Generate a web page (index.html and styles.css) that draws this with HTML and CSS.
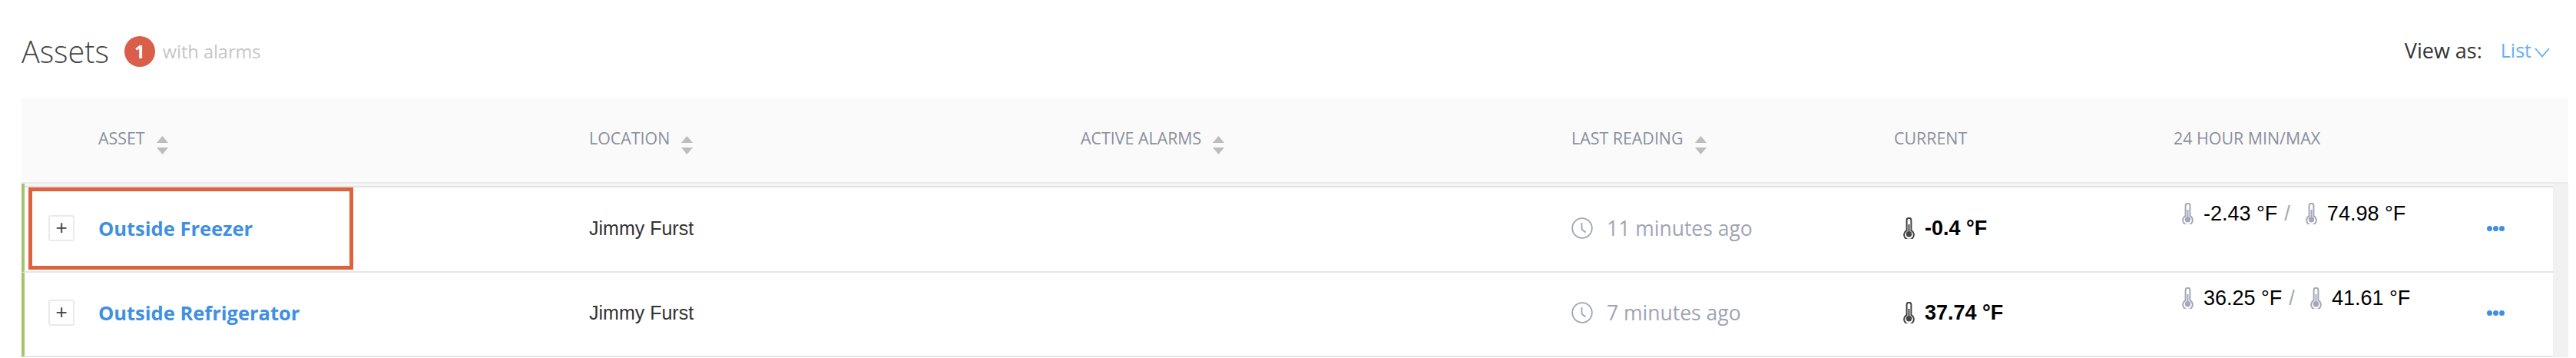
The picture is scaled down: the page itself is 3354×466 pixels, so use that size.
FILE: index.html
```html
<!DOCTYPE html>
<html>
	<head>
		<title>Assets</title>
		<link rel="stylesheet" href="styles.css">
	</head>
	<body>
		<svg class="defs" width="0" height="0">
			<symbol id="thermo" viewBox="0 0 15 28">
				<path d="M4.600 3.600a2.900 2.900 0 0 1 5.800 0v13.400a6.300 6.300 0 1 1-5.800 0z" fill="none" stroke="currentColor" stroke-width="2"/>
				<circle cx="7.500" cy="21.800" r="3.700" fill="currentColor"/>
				<path d="M7.500 9v12" stroke="currentColor" stroke-width="2"/>
			</symbol>
			<symbol id="clock" viewBox="0 0 28 28">
				<circle cx="14" cy="14" r="12.800" fill="none" stroke="currentColor" stroke-width="1.800"/>
				<path d="M13.500 7v8.500l5 4" fill="none" stroke="currentColor" stroke-width="1.800"/>
			</symbol>
			<symbol id="sort" viewBox="0 0 15 24">
				<path d="M7.500 0L15 9H0z" fill="currentColor"/>
				<path d="M0 15h15L7.500 24z" fill="currentColor"/>
			</symbol>
		</svg>

		<div class="topbar">
			<div class="title-group">
				<h1 class="title">Assets</h1>
				<span class="badge">1</span>
				<span class="badge-label">with alarms</span>
			</div>
			<div class="view-as">
				<span class="view-label">View as:</span>
				<span class="view-value">List</span>
				<svg class="chevron" width="20" height="13" viewBox="0 0 20 13"><path d="M1 1l9 10.500L19 1" fill="none" stroke="currentColor" stroke-width="1.800"/></svg>
			</div>
		</div>

		<div class="table-head row-grid">
			<div></div>
			<div class="th">ASSET <svg class="sort"><use href="#sort"/></svg></div>
			<div class="th">LOCATION <svg class="sort"><use href="#sort"/></svg></div>
			<div class="th">ACTIVE ALARMS <svg class="sort"><use href="#sort"/></svg></div>
			<div class="th">LAST READING <svg class="sort"><use href="#sort"/></svg></div>
			<div class="th">CURRENT</div>
			<div class="th">24 HOUR MIN/MAX</div>
			<div></div>
		</div>

		<div class="table-body">
			<div class="row row-grid">
				<div class="cell"><span class="expand">+</span></div>
				<div class="cell"><a class="asset-name">Outside Freezer</a></div>
				<div class="cell location">Jimmy Furst</div>
				<div class="cell"></div>
				<div class="cell reading"><svg class="clock"><use href="#clock"/></svg>11 minutes ago</div>
				<div class="cell current"><svg class="thermo"><use href="#thermo"/></svg>-0.4 °F</div>
				<div class="minmax">
					<svg class="thermo"><use href="#thermo"/></svg><span>-2.43 °F</span><i class="slash">/</i>
					<svg class="thermo second"><use href="#thermo"/></svg><span>74.98 °F</span>
				</div>
				<div class="cell dots"><b></b><b></b><b></b></div>
				<div class="callout"></div>
			</div>
			<div class="row row-grid">
				<div class="cell"><span class="expand">+</span></div>
				<div class="cell"><a class="asset-name">Outside Refrigerator</a></div>
				<div class="cell location">Jimmy Furst</div>
				<div class="cell"></div>
				<div class="cell reading"><svg class="clock"><use href="#clock"/></svg>7 minutes ago</div>
				<div class="cell current"><svg class="thermo"><use href="#thermo"/></svg>37.74 °F</div>
				<div class="minmax">
					<svg class="thermo"><use href="#thermo"/></svg><span>36.25 °F</span><i class="slash">/</i>
					<svg class="thermo second"><use href="#thermo"/></svg><span>41.61 °F</span>
				</div>
				<div class="cell dots"><b></b><b></b><b></b></div>
			</div>
		</div>
	</body>
</html>
```

FILE: styles.css
```css
html, body {
	height: 100%;
	overflow: hidden;
}
body {
	margin: 0;
	background: #fff;
	font-family: "Open Sans", "Liberation Sans", sans-serif;
	position: relative;
}
.defs {
	display: block;
	height: 0;
}

/* top */
.topbar {
	height: 128px;
	box-sizing: border-box;
	padding: 47px 34px 0 28px;
	display: flex;
	justify-content: space-between;
	align-items: flex-start;
}
.title-group {
	display: flex;
	align-items: center;
	height: 40px;
}
.title {
	margin: 0 20px 0 0;
	font-size: 39.500px;
	line-height: 40px;
	font-weight: 300;
	color: #444;
}
.badge {
	width: 40px;
	height: 40px;
	line-height: 40px;
	border-radius: 50%;
	background: #d95f4a;
	color: #fff;
	font-size: 24px;
	font-weight: 700;
	text-align: center;
	margin-right: 10px;
}
.badge-label {
	font-size: 23.500px;
	color: #c6c6c6;
}
.view-as {
	display: flex;
	align-items: center;
	height: 36px;
	font-size: 25px;
}
.view-label {
	color: #333;
	font-size: 27px;
	margin-right: 24px;
}
.view-value {
	color: #64b0f4;
}
.chevron {
	color: #64b0f4;
	margin: 6px 0 0 4px;
}

/* table */
.row-grid {
	display: grid;
	grid-template-columns: 100px 639px 640px 639px 420px 364px 408px 1fr;
}
.table-head {
	margin: 0 10px 0 28px;
	height: 109px;
	background: #fafafa;
	border-bottom: 2px solid #ebebeb;
}
.th {
	font-size: 21.400px;
	color: #8a8f9c;
	padding-top: 38px;
	display: flex;
	align-items: flex-start;
	line-height: 28px;
	gap: 15px;
}
.sort {
	width: 15px;
	height: 24px;
	color: #bdbdbd;
	margin-top: 11px;
}
.table-body {
	margin: 0 10px 0 28px;
	background: #f2f1f2;
	padding-right: 20px;
}
.row {
	position: relative;
	height: 110px;
	box-sizing: border-box;
	background: #fff;
	border-left: 4px solid #a5c26d;
	border-bottom: 2px solid #e6e6e6;
	grid-template-columns: 96px 639px 640px 639px 420px 364px 408px 1fr;
}
.row:first-child {
	height: 116px;
	padding-top: 6px;
	background: linear-gradient(#f5f5f5 0, #f5f5f5 3px, #e2e2e2 3px, #e2e2e2 5px, #fff 5px);
}
.cell {
	display: flex;
	align-items: center;
	padding-bottom: 4px;
}
.expand {
	width: 34px;
	height: 34px;
	box-sizing: border-box;
	margin-left: 31px;
	border: 2px solid #eaeaea;
	border-radius: 3px;
	color: #444;
	font: 26px/28px "Liberation Sans", sans-serif;
	text-align: center;
}
.asset-name {
	font-size: 25.500px;
	font-weight: 700;
	color: #3f8fe2;
}
.location {
	font: 25px "Liberation Sans", sans-serif;
	color: #333;
}
.reading {
	font-size: 26.500px;
	color: #a0a4b4;
}
.clock {
	width: 28px;
	height: 28px;
	margin-right: 18px;
}
.thermo {
	width: 15px;
	height: 28px;
	flex: none;
}
.current {
	font: bold 27px "Liberation Sans", sans-serif;
	color: #000;
	padding-left: 12px;
}
.current .thermo {
	color: #444;
	margin-right: 13px;
}
.minmax {
	font: 27px "Liberation Sans", sans-serif;
	color: #000;
	display: flex;
	align-items: center;
	height: 28px;
	margin-top: 19px;
	padding-left: 11px;
}
.minmax .thermo {
	color: #a4a8b8;
	margin-right: 13px;
}
.slash {
	font-style: normal;
	color: #a4a8b8;
	margin-left: 9px;
}
.minmax .second {
	margin-left: 20px;
}
.dots {
	gap: 1px;
}
.dots b {
	width: 7px;
	height: 7px;
	border-radius: 50%;
	background: #3f8fe2;
}

/* red box drawn on top of the first row */
.callout {
	position: absolute;
	left: 5px;
	top: 5px;
	width: 423px;
	height: 107px;
	box-sizing: border-box;
	border: 5px solid #de633c;
}
```
